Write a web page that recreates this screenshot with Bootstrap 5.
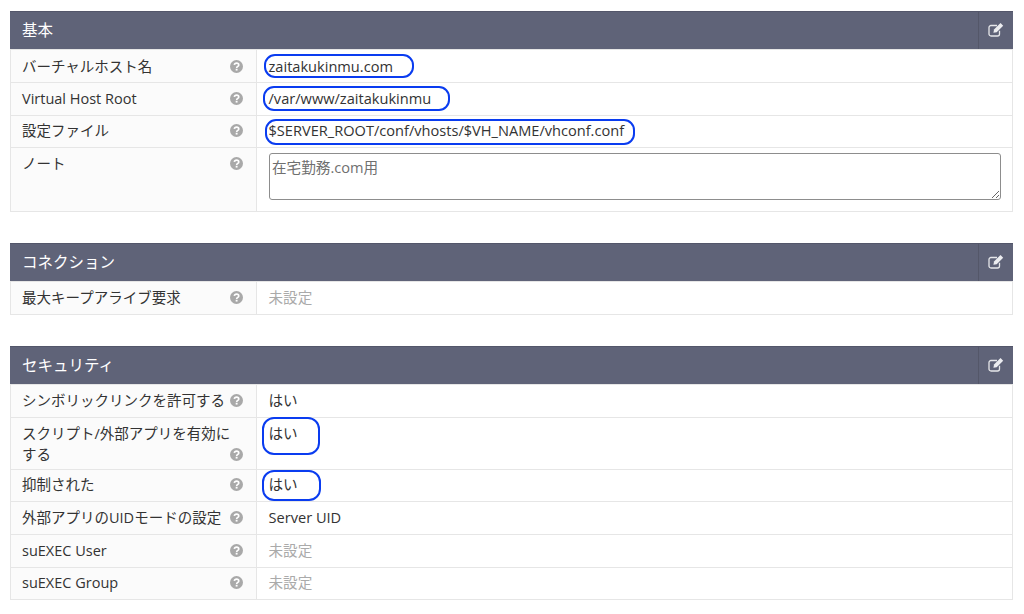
<!DOCTYPE html>
<html lang="ja">
<head>
<meta charset="utf-8">
<title>設定</title>
<link href="https://cdn.jsdelivr.net/npm/bootstrap@5.3.0/dist/css/bootstrap.min.css" rel="stylesheet">
<style>
html,body{height:100%;overflow:hidden}
body{background:#fff;color:#333;font-family:"Open Sans","Noto Sans CJK JP",sans-serif;font-size:14.5px;line-height:1.45}
.page-wrap{padding:11px 11px 0 10px}
.conf-panel{margin-bottom:31px}
.conf-head{height:38.4px;background:#5f6378;color:#fff;font-size:15.5px;border-top:1px solid #53566a}
.conf-head .conf-title{padding-left:12px}
.edit-cell{width:35px;border-left:1px solid #545769}
.edit-cell svg{margin-bottom:2px}
.conf-tbl{table-layout:fixed;width:100%;margin:0;border-collapse:separate;border-spacing:0}
.conf-tbl td{border:0 solid #e6e6e6;border-width:0 1px 1px 0;padding:4.8px 11px 0 11.5px;vertical-align:top;height:32.67px;color:#333;background:#fff;font-size:14.6px}
.conf-tbl td.lbl{width:247px;background:#fbfbfb;padding:4.8px 13px 0 11px;border-left-width:1px;font-size:14.5px}
.conf-tbl tr:first-child td{border-top-width:1px;height:33.67px}
.conf-tbl tr.row-low td,.conf-tbl tr.row-low td.lbl{padding-top:5.8px}
.conf-tbl tr.row-high td,.conf-tbl tr.row-high td.lbl{padding-top:4px}
.conf-tbl td.unset{color:#aaa}
.conf-tbl td.tall{height:51.5px}
.lbl-wrap{display:flex;justify-content:space-between}
.lbl-wrap.tail{align-items:flex-end}
.lbl-wrap.tail .help-ico{margin-left:-4px;margin-bottom:4px}
.help-ico{width:13px;height:13px;flex:none;margin-top:4px}
.note-box{display:block;width:100%;height:47px;margin:-1px 0 0;border:1px solid #8d8d8d;border-radius:3px;padding:3px 2.5px;font:inherit;color:#6f6f6f;background:#fff;resize:vertical;line-height:1.45}
.conf-tbl td.note-cell{height:63.6px;padding-top:5.4px;padding-bottom:10px}
.mark-host{position:relative}
.blue-ring{position:absolute;border:2.5px solid #0a3cf0;border-radius:11px;pointer-events:none}
.r1{left:-5px;top:-2px;width:150px;height:24px}
.r2{left:-6px;top:-2px;width:187px;height:25px}
.r3{left:-4px;top:-.5px;width:370px;height:26px}
.r4{left:-7px;top:-5.6px;width:58px;height:38px;border-radius:12px}
.r5{left:-7px;top:-4.2px;width:59px;height:31px;border-radius:12px}
</style>
</head>
<body>
<svg width="0" height="0" class="position-absolute">
<symbol id="q" viewBox="0 0 16 16"><circle cx="8" cy="8" r="8" fill="#a9a9a9"/><path d="M5.3 6.1C5.5 4.6 6.6 3.8 8.1 3.8c1.6 0 2.7 1 2.7 2.2 0 1.9-2.5 1.9-2.6 3.8" fill="none" stroke="#fff" stroke-width="2"/><rect x="7" y="10.8" width="2.3" height="2.2" fill="#fff"/></symbol>
<symbol id="ed" viewBox="0 0 16 16"><path d="M11.5 8.8v3.2a2 2 0 0 1-2 2H3a2 2 0 0 1-2-2V5.5a2 2 0 0 1 2-2h6" fill="none" stroke="#e6e7ea" stroke-width="1.3"/><path d="M5.4 10.8l.6-3.2 6.5-6.5 2.7 2.7-6.5 6.4z" fill="#eceDF0"/></symbol>
</svg>
<div class="page-wrap">

<section class="conf-panel">
<div class="conf-head d-flex align-items-stretch">
<div class="conf-title flex-grow-1 d-flex align-items-center">基本</div>
<div class="edit-cell d-flex align-items-center justify-content-center"><svg width="16" height="16"><use href="#ed"/></svg></div>
</div>
<table class="conf-tbl"><tbody>
<tr class="row-low"><td class="lbl"><div class="lbl-wrap"><span>バーチャルホスト名</span><svg class="help-ico"><use href="#q"/></svg></div></td><td><span class="mark-host d-inline-block">zaitakukinmu.com<span class="blue-ring r1"></span></span></td></tr>
<tr><td class="lbl"><div class="lbl-wrap"><span>Virtual Host Root</span><svg class="help-ico"><use href="#q"/></svg></div></td><td><span class="mark-host d-inline-block">/var/www/zaitakukinmu<span class="blue-ring r2"></span></span></td></tr>
<tr class="row-high"><td class="lbl"><div class="lbl-wrap"><span>設定ファイル</span><svg class="help-ico"><use href="#q"/></svg></div></td><td><span class="mark-host d-inline-block">$SERVER_ROOT/conf/vhosts/$VH_NAME/vhconf.conf<span class="blue-ring r3"></span></span></td></tr>
<tr><td class="lbl"><div class="lbl-wrap"><span>ノート</span><svg class="help-ico"><use href="#q"/></svg></div></td><td class="note-cell"><textarea class="note-box" aria-label="ノート">在宅勤務.com用</textarea></td></tr>
</tbody></table>
</section>

<section class="conf-panel">
<div class="conf-head d-flex align-items-stretch">
<div class="conf-title flex-grow-1 d-flex align-items-center">コネクション</div>
<div class="edit-cell d-flex align-items-center justify-content-center"><svg width="16" height="16"><use href="#ed"/></svg></div>
</div>
<table class="conf-tbl"><tbody>
<tr><td class="lbl"><div class="lbl-wrap"><span>最大キープアライブ要求</span><svg class="help-ico"><use href="#q"/></svg></div></td><td class="unset">未設定</td></tr>
</tbody></table>
</section>

<section class="conf-panel">
<div class="conf-head d-flex align-items-stretch">
<div class="conf-title flex-grow-1 d-flex align-items-center">セキュリティ</div>
<div class="edit-cell d-flex align-items-center justify-content-center"><svg width="16" height="16"><use href="#ed"/></svg></div>
</div>
<table class="conf-tbl"><tbody>
<tr><td class="lbl"><div class="lbl-wrap"><span>シンボリックリンクを許可する</span><svg class="help-ico"><use href="#q"/></svg></div></td><td>はい</td></tr>
<tr><td class="lbl tall"><div class="lbl-wrap tail"><span>スクリプト/外部アプリを有効にする</span><svg class="help-ico"><use href="#q"/></svg></div></td><td class="tall"><span class="mark-host d-inline-block">はい<span class="blue-ring r4"></span></span></td></tr>
<tr><td class="lbl"><div class="lbl-wrap"><span>抑制された</span><svg class="help-ico"><use href="#q"/></svg></div></td><td><span class="mark-host d-inline-block">はい<span class="blue-ring r5"></span></span></td></tr>
<tr><td class="lbl"><div class="lbl-wrap"><span>外部アプリのUIDモードの設定</span><svg class="help-ico"><use href="#q"/></svg></div></td><td>Server UID</td></tr>
<tr><td class="lbl"><div class="lbl-wrap"><span>suEXEC User</span><svg class="help-ico"><use href="#q"/></svg></div></td><td class="unset">未設定</td></tr>
<tr><td class="lbl"><div class="lbl-wrap"><span>suEXEC Group</span><svg class="help-ico"><use href="#q"/></svg></div></td><td class="unset">未設定</td></tr>
</tbody></table>
</section>

</div>
<script src="https://cdn.jsdelivr.net/npm/bootstrap@5.3.0/dist/js/bootstrap.bundle.min.js"></script>
</body>
</html>
